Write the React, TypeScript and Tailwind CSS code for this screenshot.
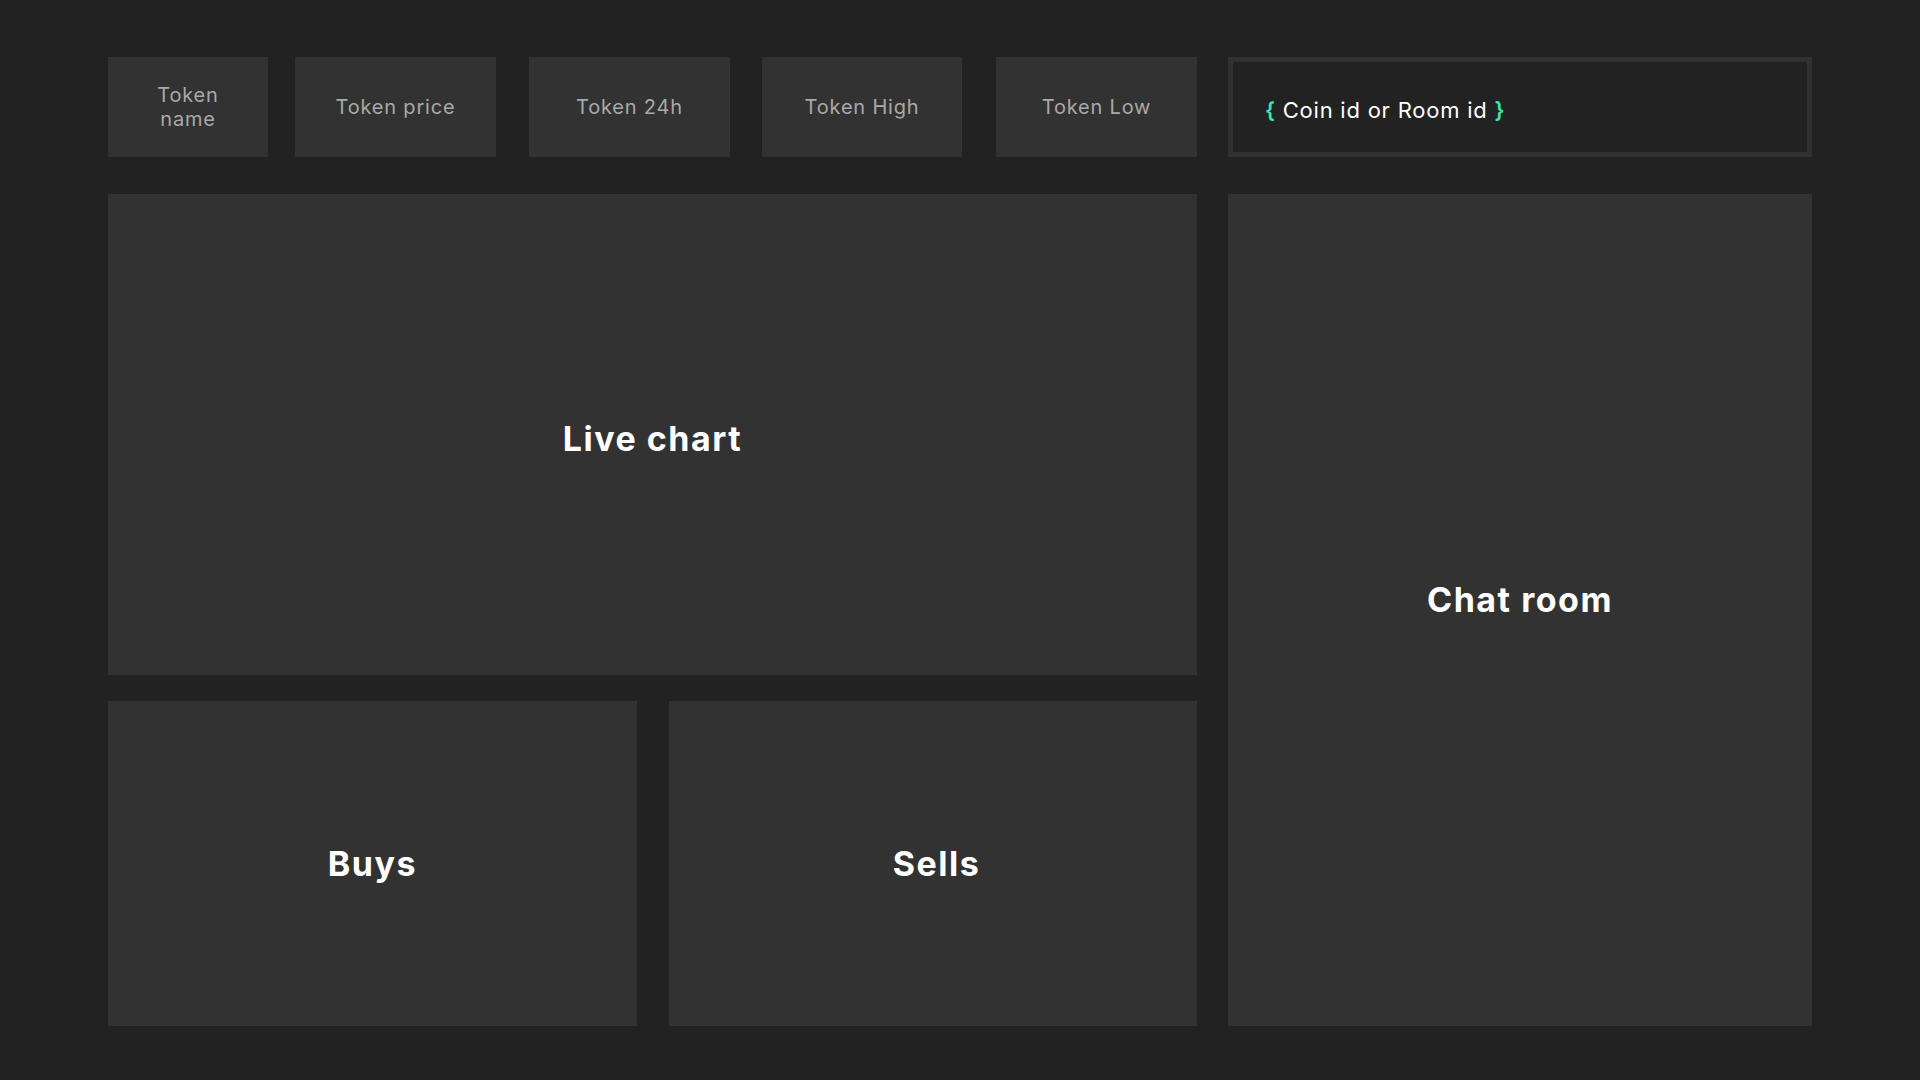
const stats = [
  { label: "Token name", w: "w-[160px]", wrap: true },
  { label: "Token price", w: "w-[201px]" },
  { label: "Token 24h", w: "w-[201px]" },
  { label: "Token High", w: "w-[200px]" },
  { label: "Token Low", w: "w-[201px]" },
]

function StatCard({ label, w, wrap }: { label: string; w: string; wrap?: boolean }) {
  return (
    <div className={`${w} shrink-0 h-full bg-[#323232] flex items-center justify-center text-center text-[20px] leading-[24px] tracking-[0.04em] text-[#a9a9a9]`}>
      {wrap ? (
        <span>
          Token
          <br />
          name
        </span>
      ) : (
        label
      )}
    </div>
  )
}

function Panel({ title, className = "" }: { title: string; className?: string }) {
  return (
    <div className={`bg-[#323232] flex items-center justify-center ${className}`}>
      <h2 className="text-[34px] font-bold tracking-[0.045em] text-white">{title}</h2>
    </div>
  )
}

export default function App() {
  return (
    <main
      className="w-[1920px] h-[1080px] bg-[#222222] pt-[57px] pl-[108px]"
      style={{ fontFamily: "Inter, 'Noto Sans', sans-serif" }}
    >
      <div className="flex gap-[31px]">
        {/* left column */}
        <div className="w-[1089px] flex flex-col">
          <div className="h-[100px] flex">
            <StatCard {...stats[0]} />
            <div className="w-[27px] shrink-0" />
            <StatCard {...stats[1]} />
            <div className="w-[33px] shrink-0" />
            <StatCard {...stats[2]} />
            <div className="w-[32px] shrink-0" />
            <StatCard {...stats[3]} />
            <div className="w-[34px] shrink-0" />
            <StatCard {...stats[4]} />
          </div>
          <Panel title="Live chart" className="mt-[37px] h-[481px] pt-[8px]" />
          <div className="mt-[26px] h-[325px] flex gap-[32px]">
            <Panel title="Buys" className="w-[529px] h-full" />
            <Panel title="Sells" className="w-[528px] h-full pl-[7px]" />
          </div>
        </div>

        {/* right column */}
        <div className="w-[584px] flex flex-col">
          <div className="h-[100px] border-[5px] border-[#313131] bg-[#222222] flex items-center pl-[32px] pt-[6px]">
            <span className="text-[22px] tracking-[0.035em] text-white">
              <span className="text-[#3fe3b8] font-semibold">{"{"}</span> Coin id or Room id{" "}
              <span className="text-[#3fe3b8] font-semibold">{"}"}</span>
            </span>
          </div>
          <Panel title="Chat room" className="mt-[37px] h-[832px] pb-[22px]" />
        </div>
      </div>
    </main>
  )
}
